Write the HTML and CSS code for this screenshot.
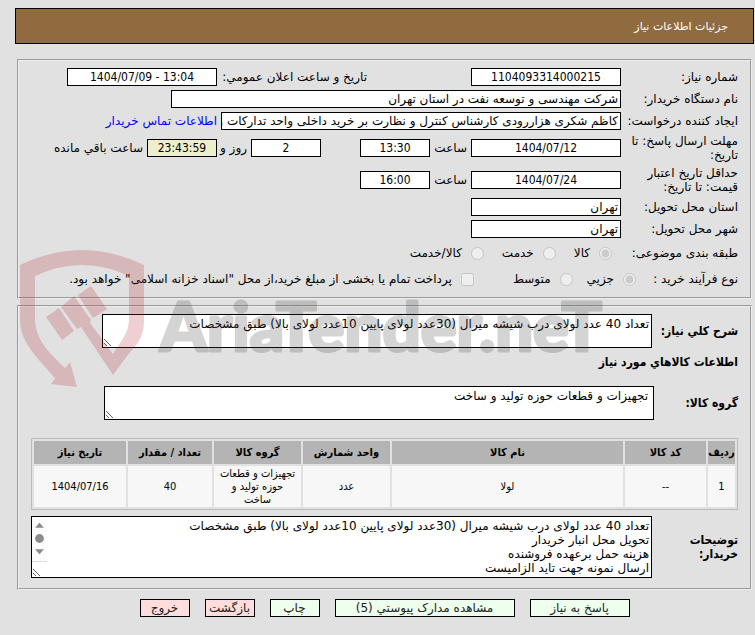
FILE: index.html
```
<!DOCTYPE html>
<html lang="fa" dir="rtl">
  <head>
    <meta charset="utf-8">
    <title>جزئیات اطلاعات نیاز</title>
    <link rel="stylesheet" href="styles.css">
  </head>

  <body>
    <div class="header">جزئیات اطلاعات نیاز</div>

    <form class="need-form">
      <fieldset class="box info">
        <div class="row">
          <label class="caption" for="needNo">شماره نیاز:</label>
          <input type="text" id="needNo" class="w-date center" value="1104093314000215" readonly>
          <label class="caption-wide" for="announce">تاریخ و ساعت اعلان عمومي:</label>
          <input type="text" id="announce" class="w-date center" dir="ltr" value="1404/07/09 - 13:04" readonly>
        </div>

        <div class="row">
          <label class="caption" for="org">نام دستگاه خریدار:</label>
          <input type="text" id="org" class="w-org" value="شرکت مهندسی و توسعه نفت در استان تهران" readonly>
        </div>

        <div class="row">
          <label class="caption" for="creator">ایجاد کننده درخواست:</label>
          <input type="text" id="creator" class="w-creator" value="کاظم شکری هزاررودی کارشناس کنترل و نظارت بر خرید داخلی واحد تدارکات و خدمات کالا" readonly>
          <a class="contact" href="#">اطلاعات تماس خریدار</a>
        </div>

        <div class="row tall">
          <label class="caption" for="replyDate">مهلت ارسال پاسخ: تا تاریخ:</label>
          <input type="text" id="replyDate" class="w-date center" value="1404/07/12" readonly>
          <label class="hour" for="replyTime">ساعت</label>
          <input type="text" id="replyTime" class="w-time center" value="13:30" readonly>
          <input type="text" id="days" class="w-time center days" value="2" readonly>
          <label class="days-label" for="days">روز و</label>
          <input type="text" id="remain" class="w-time center remain" value="23:43:59" readonly>
          <label class="remain-label" for="remain">ساعت باقي مانده</label>
        </div>

        <div class="row tall">
          <label class="caption" for="priceDate">حداقل تاریخ اعتبار قیمت: تا تاریخ:</label>
          <input type="text" id="priceDate" class="w-date center" value="1404/07/24" readonly>
          <label class="hour" for="priceTime">ساعت</label>
          <input type="text" id="priceTime" class="w-time center" value="16:00" readonly>
        </div>

        <div class="row">
          <label class="caption" for="province">استان محل تحویل:</label>
          <input type="text" id="province" class="w-date" value="تهران" readonly>
        </div>

        <div class="row">
          <label class="caption" for="city">شهر محل تحویل:</label>
          <input type="text" id="city" class="w-date" value="تهران" readonly>
        </div>

        <div class="row options">
          <span class="caption">طبقه بندی موضوعی:</span>
          <div class="choices subject">
            <label><input type="radio" name="subject" checked disabled>کالا</label>
            <label><input type="radio" name="subject" disabled>خدمت</label>
            <label><input type="radio" name="subject" disabled>کالا/خدمت</label>
          </div>
        </div>

        <div class="row options">
          <span class="caption caption-short">نوع فرآیند خرید :</span>
          <div class="choices process">
            <label><input type="radio" name="process" checked disabled>جزیي</label>
            <label><input type="radio" name="process" disabled>متوسط</label>
            <label class="pay"><input type="checkbox" disabled>پرداخت تمام یا بخشی از مبلغ خرید،از محل "اسناد خزانه اسلامی" خواهد بود.</label>
          </div>
        </div>
      </fieldset>

      <fieldset class="box goods">
        <div class="area-row">
          <label class="title" for="summary">شرح کلي نیاز:</label>
          <textarea id="summary" class="short" readonly>تعداد 40 عدد لولای درب شیشه میرال (30عدد لولای پایین 10عدد لولای بالا) طبق مشخصات</textarea>
        </div>

        <h2 class="subtitle">اطلاعات کالاهاي مورد نیاز</h2>

        <div class="area-row group">
          <label class="title" for="group">گروه کالا:</label>
          <textarea id="group" class="short" readonly>تجهیزات و قطعات حوزه تولید و ساخت</textarea>
        </div>

        <table class="items">
          <colgroup>
            <col class="c-row"><col class="c-code"><col class="c-name"><col class="c-unit">
            <col class="c-unit"><col class="c-count"><col class="c-date">
          </colgroup>
          <tr>
            <th>ردیف</th>
            <th>کد کالا</th>
            <th>نام کالا</th>
            <th>واحد شمارش</th>
            <th>گروه کالا</th>
            <th>تعداد / مقدار</th>
            <th>تاریخ نیاز</th>
          </tr>
          <tr>
            <td>1</td>
            <td>--</td>
            <td>لولا</td>
            <td>عدد</td>
            <td>تجهیزات و قطعات حوزه تولید و ساخت</td>
            <td>40</td>
            <td>1404/07/16</td>
          </tr>
        </table>

        <div class="area-row">
          <label class="title" for="notes">توضیحات خریدار:</label>
          <div class="scroll-area">
            <textarea id="notes" class="long" readonly>تعداد 40 عدد لولای درب شیشه میرال (30عدد لولای پایین 10عدد لولای بالا) طبق مشخصات
تحویل محل انبار خریدار
هزینه حمل برعهده فروشنده
ارسال نمونه جهت تاید الزامیست</textarea>
            <svg class="scrollbar" width="15" height="45" viewBox="0 0 15 45" aria-hidden="true">
              <path class="track" d="M0 0H15V45H0Z"/>
              <path d="M3 11L7.5 6L12 11Z"/>
              <circle cx="7.5" cy="22" r="4.5"/>
              <path d="M3 33L7.5 38L12 33Z"/>
            </svg>
          </div>
        </div>
      </fieldset>

      <div class="buttons">
        <button type="button" class="btn wide">پاسخ به نیاز</button>
        <button type="button" class="btn widest">مشاهده مدارک پیوستي (5)</button>
        <button type="button" class="btn">چاپ</button>
        <button type="button" class="btn red">بازگشت</button>
        <button type="button" class="btn red">خروج</button>
      </div>
    </form>

    <!-- site watermark, lies over the form -->
    <svg class="watermark" width="600" height="150" viewBox="0 0 600 150" aria-hidden="true">
      <g class="shield">
        <path d="M41 57L54 46L71 70L70 73L93 104C101 90 109 84 109 68V26Q62 4 15 26V68C15 88 27 101 45 118L50 112L57 137L31 134L35 128C14 104 0 92 0 68V15Q62 -15 124 15V70C124 90 115 96 107 106L93 125L61 77L57 79Z"/>
        <path d="M26 67L39 58L54 81L42 90Z"/>
        <path d="M58 45L71 36L87 59L73 68Z"/>
      </g>
      <text class="brand" x="140" y="101" direction="ltr">AriaTender.neT</text>
    </svg>
  </body>
</html>
```
FILE: styles.css
```
* {
  box-sizing: border-box;
}

body {
  margin: 8px 1px 8px 15px;
  background-color: #e1e1e1;
  color: #000;
  font-family: Tahoma, "DejaVu Sans", sans-serif;
  font-size: 12px;
  line-height: 14px;
}

input,
textarea,
button {
  font-family: inherit;
  font-size: 12px;
  line-height: 14px;
}

.header {
  height: 36px;
  padding: 11px 25px 0;
  border: 1px solid #000;
  background-color: #8f6b3f;
  color: #fff;
  font-size: 11px;
}

.need-form {
  margin: 15px 2px 0;
}

.box {
  min-width: 0;
  margin: 0;
  border: 2px groove #eee;
}

.info {
  padding: 5px 12px;
}

.goods {
  margin-top: 6px;
  padding: 7px 12px 10px;
}

.row {
  display: flex;
  align-items: center;
  height: 22px;
}

.row.tall {
  height: 32px;
}

.row.options {
  height: 26px;
}

.caption {
  flex: none;
  width: 117px;
}

.row input[type="text"] {
  flex: none;
  height: 18px;
  margin: 0;
  padding: 0 2px;
  border: 1px solid #000;
  background-color: #fff;
}

.row .center {
  font-family: Tahoma, "DejaVu Sans Condensed", sans-serif;
  text-align: center;
}

.w-date {
  width: 150px;
}

.w-org {
  width: 450px;
}

.row input.w-creator {
  width: 400px;
  padding-left: 0;
}

.w-time {
  width: 70px;
}

.caption-wide {
  width: 254px;
  padding-right: 104px;
  white-space: nowrap;
}

.contact {
  margin-right: 4px;
  color: #00f;
  text-decoration: none;
}

.hour {
  width: 41px;
  padding-right: 4px;
}

.row input.days {
  margin-right: 39px;
}

.days-label {
  width: 34px;
  padding-right: 4px;
}

.row input.remain {
  background-color: #eec;
}

.remain-label {
  padding-right: 4px;
}

.caption-short {
  width: 93px;
  white-space: nowrap;
}

.choices {
  display: flex;
  white-space: nowrap;
}

.choices label {
  display: flex;
  align-items: center;
}

.choices input {
  width: 13px;
  height: 13px;
  margin: 0 9px;
}

.subject label + label {
  margin-right: 9px;
}

.process label + label {
  margin-right: 5px;
}

.process label.pay {
  margin-right: 30px;
}

.area-row {
  display: flex;
  align-items: center;
}

.title,
.subtitle,
.items {
  font-family: Tahoma, "DejaVu Sans Condensed", sans-serif;
}

.title {
  flex: none;
  width: 86px;
  font-weight: bold;
}

textarea {
  display: block;
  margin: 0;
  padding: 2px;
  border: 1px solid #000;
  background-color: #fff;
}

.short {
  width: 550px;
  height: 34px;
}

.group .title {
  width: 84px;
}

.group .short {
  padding-right: 5px;
}

.subtitle {
  margin: 7px 0 17px;
  font-size: 12px;
}

.items {
  width: 100%;
  margin: 18px 0 6px;
  border: 1px solid #bbb;
  border-spacing: 2px;
  table-layout: fixed;
  font-size: 11px;
  line-height: 13px;
  text-align: center;
}

.items th {
  height: 23px;
  padding: 0;
  background-color: #b4b4b4;
}

.items td {
  height: 41px;
  padding: 1px 3px;
  background-color: #f7f7f7;
}

.c-row {
  width: 27px;
}

.c-code {
  width: 81px;
}

.c-unit {
  width: 87px;
}

.c-count {
  width: 84px;
}

.c-date {
  width: 92px;
}

.scroll-area {
  position: relative;
  flex: 1;
}

.long {
  width: 100%;
  height: 62px;
}

.scrollbar {
  position: absolute;
  top: 1px;
  left: 1px;
  border-bottom: 1px solid #ddd;
  fill: #8b8b8b;
}

.scrollbar .track {
  fill: #fcfcfc;
}

.buttons {
  display: flex;
  justify-content: center;
  gap: 15px;
  margin-top: 9px;
}

.btn {
  width: 50px;
  height: 18px;
  padding: 0;
  border: 1px solid #000;
  background-color: #efe;
  color: #222;
  white-space: nowrap;
}

.btn.wide {
  width: 100px;
}

.btn.widest {
  width: 180px;
}

.btn.red {
  background-color: #fdd;
}

.watermark {
  position: absolute;
  top: 250px;
  left: 20px;
  pointer-events: none;
}

.shield {
  fill: rgba(180, 40, 50, 0.22);
}

.brand {
  fill: #424242;
  stroke: #424242;
  stroke-width: 3px;
  stroke-linejoin: round;
  opacity: 0.22;
  font-family: Lato, "Liberation Sans", sans-serif;
  font-size: 67px;
  font-weight: 900;
}
```
